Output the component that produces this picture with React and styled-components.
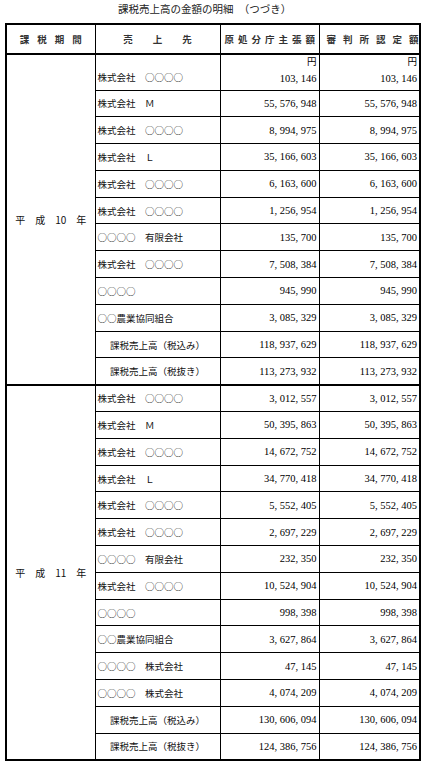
import React from 'react';
import styled, { createGlobalStyle } from 'styled-components';

const GlobalStyle = createGlobalStyle`
    html, body {
        margin: 0;
        padding: 0;
        background: #ffffff;
    }
    body {
        font-family: "Noto Sans CJK JP", "Liberation Serif", serif;
        color: #111;
    }
`;

const Page = styled.div`
    width: 426px;
    padding: 0 0 0 5px;
    box-sizing: border-box;
`;

const Title = styled.div`
    height: 23px;
    line-height: 18px;
    font-size: 10.5px;
    padding-left: 113px;
    color: #222;
    white-space: pre;
`;

const Table = styled.table`
    width: 416px;
    border-collapse: collapse;
    table-layout: fixed;
    border: 2px solid #000;
`;

const HeadRow = styled.tr`
    height: 30px;
    border-bottom: 2px solid #000;
`;

const HeadCell = styled.th`
    border-left: 1px solid #000;
    font-size: 9.5px;
    font-weight: 600;
    color: #333;
    text-align: center;
    padding: 0;
    white-space: nowrap;
`;

const HeadLabel = styled.span`
    letter-spacing: ${(p) => p.$spacing}px;
    padding-left: ${(p) => p.$spacing}px;
`;

const Row = styled.tr`
    height: ${(p) => (p.$first ? 36 : 26.8)}px;
    border-top: ${(p) => (p.$sectionStart ? '2px' : '1px')} solid #000;
`;

const PeriodCell = styled.td`
    font-size: 10px;
    text-align: center;
    vertical-align: middle;
    padding: 0;
    white-space: pre;
    border-right: 1px solid #000;
`;

const NameCell = styled.td`
    font-size: 9.5px;
    text-align: ${(p) => (p.$total ? 'center' : 'left')};
    padding: 0 0 0 ${(p) => (p.$total ? '0' : '2px')};
    vertical-align: ${(p) => (p.$first ? 'bottom' : 'middle')};
    padding-bottom: ${(p) => (p.$first ? '6px' : '0')};
    white-space: pre;
    border-left: 1px solid #000;
`;

const AmountCell = styled.td`
    font-family: "Liberation Serif", serif;
    font-size: 10.5px;
    color: #000;
    text-align: right;
    padding: 0 2px 0 0;
    vertical-align: ${(p) => (p.$first ? 'top' : 'middle')};
    white-space: pre;
    border-left: 1px solid #000;
`;

const Yen = styled.div`
    font-family: "Noto Sans CJK JP", sans-serif;
    font-size: 9.5px;
    line-height: 11px;
    margin-top: 1px;
    margin-bottom: 6px;
`;

const sections = [
    {
        period: '平　成　10　年',
        rows: [
            ['株式会社　○○○○', '103,146'],
            ['株式会社　Ｍ', '55,576,948'],
            ['株式会社　○○○○', '8,994,975'],
            ['株式会社　Ｌ', '35,166,603'],
            ['株式会社　○○○○', '6,163,600'],
            ['株式会社　○○○○', '1,256,954'],
            ['○○○○　有限会社', '135,700'],
            ['株式会社　○○○○', '7,508,384'],
            ['○○○○', '945,990'],
            ['○○農業協同組合', '3,085,329'],
            ['課税売上高（税込み）', '118,937,629', true],
            ['課税売上高（税抜き）', '113,273,932', true],
        ],
    },
    {
        period: '平　成　11　年',
        rows: [
            ['株式会社　○○○○', '3,012,557'],
            ['株式会社　Ｍ', '50,395,863'],
            ['株式会社　○○○○', '14,672,752'],
            ['株式会社　Ｌ', '34,770,418'],
            ['株式会社　○○○○', '5,552,405'],
            ['株式会社　○○○○', '2,697,229'],
            ['○○○○　有限会社', '232,350'],
            ['株式会社　○○○○', '10,524,904'],
            ['○○○○', '998,398'],
            ['○○農業協同組合', '3,627,864'],
            ['○○○○　株式会社', '47,145'],
            ['○○○○　株式会社', '4,074,209'],
            ['課税売上高（税込み）', '130,606,094', true],
            ['課税売上高（税抜き）', '124,386,756', true],
        ],
    },
];

// the scanned form prints the comma with a gap after it
const fmt = (v) => v.replace(/,/g, ', ');

function Amount({ value, first }) {
    return (
        <AmountCell $first={first}>
            {first && <Yen>円</Yen>}
            {fmt(value)}
        </AmountCell>
    );
}

export default function App() {
    return (
        <Page>
            <GlobalStyle />
            <Title>課税売上高の金額の明細　（つづき）</Title>
            <Table>
                <colgroup>
                    <col style={{ width: '89px' }} />
                    <col style={{ width: '125px' }} />
                    <col style={{ width: '99px' }} />
                    <col style={{ width: '101px' }} />
                </colgroup>
                <thead>
                    <HeadRow>
                        <HeadCell><HeadLabel $spacing={8}>課税期間</HeadLabel></HeadCell>
                        <HeadCell><HeadLabel $spacing={20}>売上先</HeadLabel></HeadCell>
                        <HeadCell><HeadLabel $spacing={4}>原処分庁主張額</HeadLabel></HeadCell>
                        <HeadCell><HeadLabel $spacing={7}>審判所認定額</HeadLabel></HeadCell>
                    </HeadRow>
                </thead>
                <tbody>
                    {sections.map((section, si) =>
                        section.rows.map(([name, value, total], ri) => {
                            const first = si === 0 && ri === 0;
                            return (
                                <Row key={`${si}-${ri}`} $first={first} $sectionStart={si > 0 && ri === 0}>
                                    {ri === 0 && (
                                        <PeriodCell rowSpan={section.rows.length}>{section.period}</PeriodCell>
                                    )}
                                    <NameCell $total={total} $first={first}>{name}</NameCell>
                                    <Amount value={value} first={first} />
                                    <Amount value={value} first={first} />
                                </Row>
                            );
                        })
                    )}
                </tbody>
            </Table>
        </Page>
    );
}
